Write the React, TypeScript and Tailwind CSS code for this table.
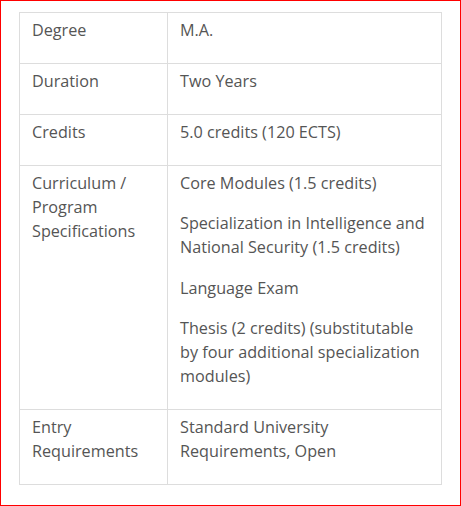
import React from "react";

const rows: { label: string; values: string[] }[] = [
  { label: "Degree", values: ["M.A."] },
  { label: "Duration", values: ["Two Years"] },
  { label: "Credits", values: ["5.0 credits (120 ECTS)"] },
  {
    label: "Curriculum / Program Specifications",
    values: [
      "Core Modules (1.5 credits)",
      "Specialization in Intelligence and National Security (1.5 credits)",
      "Language Exam",
      "Thesis (2 credits) (substitutable by four additional specialization modules)",
    ],
  },
  { label: "Entry Requirements", values: ["Standard University Requirements, Open"] },
];

export default function App() {
  return (
    <div
      className="w-[461px] h-[506px] border border-[#ff0000] bg-white pl-[18px] pt-[11px] text-[16.2px] leading-[24.1px] text-[#555555]"
      style={{ fontFamily: '"Open Sans", "Noto Sans", sans-serif' }}
    >
      <table className="w-[423px] border-collapse border border-[#dddddd] table-fixed">
        <colgroup>
          <col className="w-[148px]" />
          <col />
        </colgroup>
        <tbody>
          {rows.map((r) => (
            <tr key={r.label}>
              <td className="border border-[#dddddd] align-top px-[12px] pt-[5px] pb-[5px]">
                <p className="mb-[16px]">{r.label}</p>
              </td>
              <td className="border border-[#dddddd] align-top px-[12px] pt-[5px] pb-[5px]">
                {r.values.map((v) => (
                  <p key={v} className="mb-[16px]">
                    {v}
                  </p>
                ))}
              </td>
            </tr>
          ))}
        </tbody>
      </table>
    </div>
  );
}
